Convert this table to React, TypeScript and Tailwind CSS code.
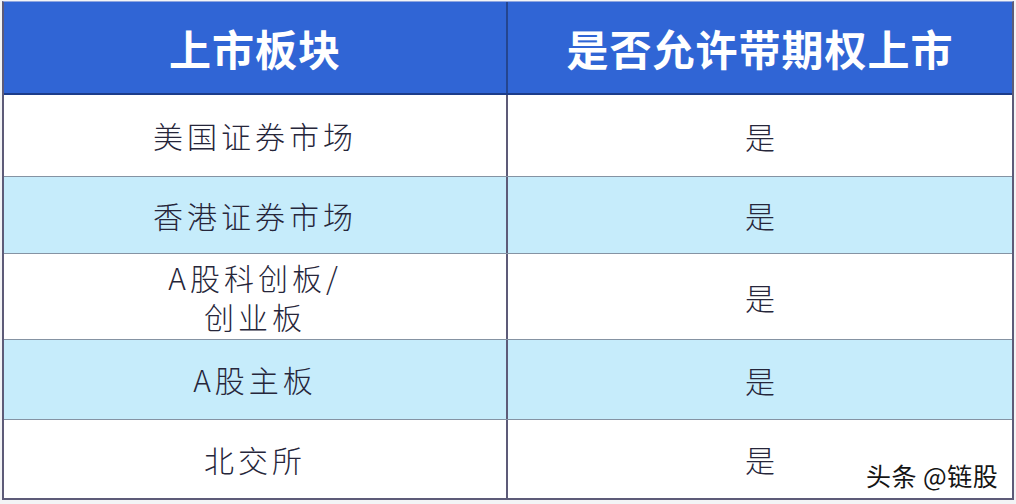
import React from 'react';

const rows = [
  { name: ['美国证券市场'], value: '是', h: 'h-[82px]', bg: 'bg-white' },
  { name: ['香港证券市场'], value: '是', h: 'h-[77px]', bg: 'bg-[#c6ecfb]' },
  { name: ['A股科创板/', '创业板'], value: '是', h: 'h-[86px]', bg: 'bg-white' },
  { name: ['A股主板'], value: '是', h: 'h-[80px]', bg: 'bg-[#c6ecfb]' },
  { name: ['北交所'], value: '是', h: 'h-[78px]', bg: 'bg-white' },
];

export default function App() {
  return (
    <div
      className="relative w-[1016px] h-[504px] bg-[#f3f4f6] pt-[1px] pl-[2px] overflow-hidden"
      style={{ fontFamily: '"Noto Sans CJK SC", "Noto Sans", sans-serif' }}
    >
      <div className="w-[1012px] border-l-2 border-r-2 border-b-2 border-[#5d5b78] border-t border-t-[#8fa6e0]">
        {/* header */}
        <div className="grid grid-cols-[504px_1fr] h-[93px] bg-[#3065d5] border-b-2 border-[#1c3c8a]">
          <div className="flex items-center justify-center border-r-2 border-[#24458f] text-white font-bold text-[42px] tracking-[1px] leading-none">
            上市板块
          </div>
          <div className="flex items-center justify-center text-white font-bold text-[42px] tracking-[1px] leading-none">
            是否允许带期权上市
          </div>
        </div>

        {rows.map((r, i) => (
          <div
            key={i}
            className={`grid grid-cols-[504px_1fr] ${r.h} ${r.bg} ${i < rows.length - 1 ? 'border-b border-[#8593a3]' : ''}`}
          >
            <div className="flex flex-col items-center justify-center border-r-2 border-[#5d5b78] text-[#26263a] font-light text-[30px] tracking-[4px] leading-[39px]">
              {r.name.map((line, j) => (
                <span key={j} className="block h-[39px]">{line}</span>
              ))}
            </div>
            <div className="flex items-center justify-center text-[#26263a] font-light text-[30px] leading-none">
              {r.value}
            </div>
          </div>
        ))}
      </div>

      {/* watermark */}
      <div
        className="absolute left-[866px] top-[463px] text-[25px] leading-none text-[#151515] tracking-[0.5px]"
        style={{ textShadow: '0 0 2px #fff, 0 0 2px #fff, 1px 1px 1px #fff' }}
      >
        头条 @链股
      </div>
    </div>
  );
}
